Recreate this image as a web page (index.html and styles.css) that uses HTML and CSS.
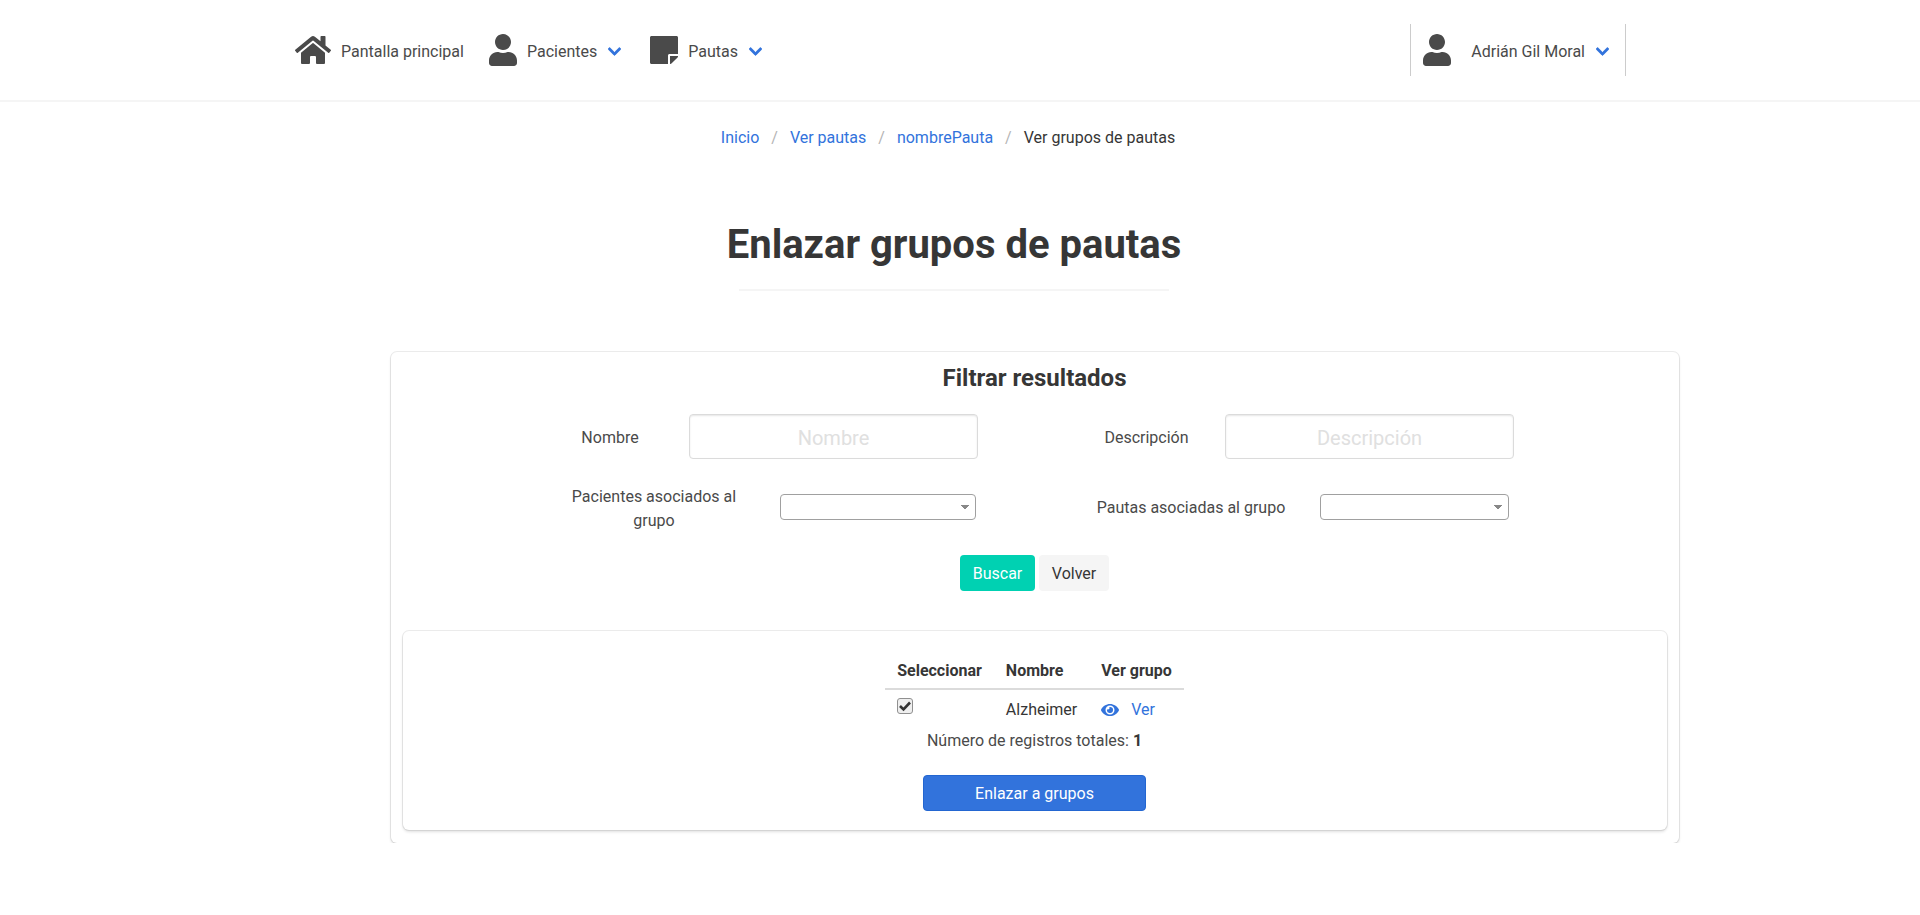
FILE: index.html
```html
<!DOCTYPE html>
<html lang="es">
<head>
    <meta charset="UTF-8">
    <meta name="viewport" content="width=device-width, initial-scale=1.0">
    <title>Enlazar grupos de pautas</title>
    <link rel="stylesheet" href="styles.css">
</head>
<body>
    <svg class="icon-defs" xmlns="http://www.w3.org/2000/svg">
        <symbol id="i-home" viewBox="0 0 576 512"><path d="M280.37 148.26L96 300.11V464a16 16 0 0 0 16 16l112.06-.29a16 16 0 0 0 15.92-16V368a16 16 0 0 1 16-16h64a16 16 0 0 1 16 16v95.64a16 16 0 0 0 16 16.05L464 480a16 16 0 0 0 16-16V300L295.67 148.26a12.19 12.19 0 0 0-15.3 0zM571.6 251.47L488 182.56V44.05a12 12 0 0 0-12-12h-56a12 12 0 0 0-12 12v72.61L318.47 43a48 48 0 0 0-61 0L4.34 251.47a12 12 0 0 0-1.6 16.9l25.5 31A12 12 0 0 0 45.15 301l235.22-193.74a12.19 12.19 0 0 1 15.3 0L530.9 301a12 12 0 0 0 16.9-1.6l25.5-31a12 12 0 0 0-1.7-16.93z"/></symbol>
        <symbol id="i-user" viewBox="0 0 448 512"><path d="M224 256c70.7 0 128-57.3 128-128S294.7 0 224 0 96 57.3 96 128s57.3 128 128 128zm89.6 32h-16.7c-22.2 10.2-46.9 16-72.9 16s-50.6-5.8-72.9-16h-16.7C60.2 288 0 348.2 0 422.4V464c0 26.5 21.5 48 48 48h352c26.5 0 48-21.5 48-48v-41.6c0-74.2-60.2-134.4-134.4-134.4z"/></symbol>
        <symbol id="i-note" viewBox="0 0 448 512"><path d="M312 320h136V56c0-13.3-10.7-24-24-24H24C10.7 32 0 42.7 0 56v400c0 13.3 10.7 24 24 24h264V344c0-13.2 10.8-24 24-24zm129 55l-98 98c-4.5 4.5-10.6 7-17 7h-6V352h128v6.1c0 6.3-2.5 12.4-7 16.9z"/></symbol>
        <symbol id="i-chevron" viewBox="0 0 448 512"><path d="M207.029 381.476L12.686 187.132c-9.373-9.373-9.373-24.569 0-33.941l22.667-22.667c9.357-9.357 24.522-9.375 33.901-.04L224 284.505l154.745-154.021c9.379-9.335 24.544-9.317 33.901.04l22.667 22.667c9.373 9.373 9.373 24.569 0 33.941L240.971 381.476c-9.373 9.372-24.569 9.372-33.942 0z"/></symbol>
        <symbol id="i-eye" viewBox="0 0 576 512"><path d="M572.52 241.4C518.29 135.59 410.93 64 288 64S57.68 135.64 3.48 241.41a32.35 32.35 0 0 0 0 29.19C57.71 376.41 165.07 448 288 448s230.32-71.64 284.52-177.41a32.35 32.35 0 0 0 0-29.19zM288 400a144 144 0 1 1 144-144 143.93 143.93 0 0 1-144 144zm0-240a95.31 95.31 0 0 0-25.31 3.79 47.85 47.85 0 0 1-66.9 66.9A95.78 95.78 0 1 0 288 160z"/></symbol>
    </svg>

    <nav class="navbar">
        <a class="nav-item" href="#">
            <svg class="nav-icon nav-icon-wide"><use href="#i-home"/></svg>
            <span>Pantalla principal</span>
        </a>
        <a class="nav-item" href="#">
            <svg class="nav-icon"><use href="#i-user"/></svg>
            <span>Pacientes</span>
            <svg class="chevron"><use href="#i-chevron"/></svg>
        </a>
        <a class="nav-item" href="#">
            <svg class="nav-icon"><use href="#i-note"/></svg>
            <span>Pautas</span>
            <svg class="chevron"><use href="#i-chevron"/></svg>
        </a>
        <a class="nav-user" href="#">
            <svg class="nav-icon"><use href="#i-user"/></svg>
            <span>Adrián Gil Moral</span>
            <svg class="chevron"><use href="#i-chevron"/></svg>
        </a>
    </nav>

    <div class="page-head">
        <ul class="breadcrumb">
            <li><a href="#">Inicio</a></li>
            <li><a href="#">Ver pautas</a></li>
            <li><a href="#">nombrePauta</a></li>
            <li class="current">Ver grupos de pautas</li>
        </ul>
        <h1 class="title">Enlazar grupos de pautas</h1>
        <hr class="title-rule">
    </div>

    <section class="card">
        <h2 class="card-title">Filtrar resultados</h2>

        <form class="filters">
            <div class="filter-row text-row">
                <label class="filter-label" for="nombre">Nombre</label>
                <input class="text-input" id="nombre" type="text" placeholder="Nombre">
                <label class="filter-label label-second" for="descripcion">Descripción</label>
                <input class="text-input" id="descripcion" type="text" placeholder="Descripción">
            </div>
            <div class="filter-row select-row">
                <label class="filter-label label-first" for="pacientes">Pacientes asociados al grupo</label>
                <select class="select-input" id="pacientes"><option value=""></option></select>
                <label class="filter-label label-pautas" for="pautas">Pautas asociadas al grupo</label>
                <select class="select-input" id="pautas"><option value=""></option></select>
            </div>
            <div class="filter-actions">
                <button class="btn btn-search" type="button">Buscar</button>
                <button class="btn btn-back" type="button">Volver</button>
            </div>
        </form>

        <div class="results">
            <table class="results-table">
                <thead>
                    <tr><th>Seleccionar</th><th>Nombre</th><th>Ver grupo</th></tr>
                </thead>
                <tbody>
                    <tr>
                        <td>
                            <span class="check-wrap">
                                <input class="row-check" type="checkbox" checked>
                                <svg class="check-mark" viewBox="0 0 16 16"><path d="M3 8l3.5 3.5L13 4.5" fill="none" stroke="#333" stroke-width="2.6"/></svg>
                            </span>
                        </td>
                        <td>Alzheimer</td>
                        <td><a class="view-link" href="#"><svg class="eye"><use href="#i-eye"/></svg>Ver</a></td>
                    </tr>
                </tbody>
            </table>
            <p class="total">Número de registros totales: <strong>1</strong></p>
            <button class="btn btn-link-groups" type="button">Enlazar a grupos</button>
        </div>
    </section>
</body>
</html>
```

FILE: styles.css
```css
* {
    box-sizing: border-box;
}
body {
    font-family: Roboto, "Liberation Sans", sans-serif;
    font-size: 16px;
    color: #4a4a4a;
    background-color: white;
    margin: 0;
}
a {
    color: #3273dc;
    text-decoration: none;
}
.icon-defs {
    display: none;
}

/* navbar */
.navbar {
    display: flex;
    align-items: center;
    height: 102px;
    padding: 0 294px 0 295px;
    border-bottom: 2px solid #f5f5f5;
}
.nav-item {
    display: flex;
    align-items: center;
    margin-right: 25px;
    color: #4a4a4a;
}
.nav-item span,
.nav-user span {
    padding-top: 2px;
}
.nav-icon {
    width: 28px;
    height: 32px;
    margin-right: 10px;
    fill: #4a4a4a;
}
.nav-icon-wide {
    width: 36px;
}
.chevron {
    width: 13px;
    height: 15px;
    margin: 3px 4px 0 11px;
    fill: #3273dc;
    stroke: #3273dc;
    stroke-width: 24;
}
.nav-user {
    display: flex;
    align-items: center;
    height: 52px;
    margin-left: auto;
    padding: 0 12px;
    border-left: 1px solid #ccc;
    border-right: 1px solid #ccc;
    color: #4a4a4a;
}
.nav-user .nav-icon {
    margin-right: 20px;
}

/* heading */
.page-head {
    width: 1908px;
    text-align: center;
}
.breadcrumb {
    display: flex;
    justify-content: center;
    margin: 0 12px 0 0;
    padding: 24px 0 0;
    list-style: none;
    line-height: 24px;
}
.breadcrumb li + li::before {
    content: "/";
    padding: 0 12px;
    color: #b5b5b5;
}
.current {
    color: #363636;
}
.title {
    margin: 70px 0 0;
    font-size: 40px;
    line-height: 50px;
    font-weight: 700;
    color: #363636;
}
.title-rule {
    width: 430px;
    height: 2px;
    margin: 19px auto 0;
    border: none;
    background-color: #f5f5f5;
}

/* filter card */
.card {
    width: 1288px;
    height: 491px;
    margin: 61px 0 0 391px;
    padding: 12px;
    border-radius: 6px;
    box-shadow: 0 2px 3px rgba(10, 10, 10, 0.12), 0 0 0 1px rgba(10, 10, 10, 0.08);
}
.card-title {
    margin: 0 1px 0 0;
    font-size: 24px;
    line-height: 28px;
    font-weight: 700;
    text-align: center;
    color: #363636;
}
.filter-row {
    display: grid;
    align-items: center;
    text-align: center;
}
.text-row {
    grid-template-columns: 156px 289px 247px 289px;
    margin: 22px 0 0 130px;
}
.select-row {
    grid-template-columns: 211px 196px 344px 189px;
    margin: 24px 0 0 166px;
}
.filter-label {
    margin-top: 1px;
    margin-bottom: -1px;
    line-height: 24px;
}
.text-row .filter-label:first-child {
    margin-right: 2px;
}
.label-second {
    margin-left: 90px;
}
.label-first {
    margin-top: 2px;
    margin-bottom: -2px;
    margin-right: 41px;
}
.label-pautas {
    margin-left: 86px;
}
.text-input {
    height: 45px;
    padding: 2px 10px 0;
    border: 1px solid #dbdbdb;
    border-radius: 4px;
    box-shadow: inset 0 1px 2px rgba(10, 10, 10, 0.1);
    font-family: inherit;
    font-size: 20px;
    text-align: center;
    color: #363636;
}
.text-input::placeholder {
    color: #e0e0e0;
}
.select-input {
    appearance: none;
    height: 26px;
    border: 1px solid #a0a0a0;
    border-radius: 4px;
    font-family: inherit;
    font-size: 16px;
    background-color: white;
    /* the little triangle of the select */
    background-image: linear-gradient(45deg, transparent 50%, #888 50%), linear-gradient(-45deg, transparent 50%, #888 50%);
    background-size: 4px 5px, 4px 5px;
    background-position: right 10px top 10px, right 6px top 10px;
    background-repeat: no-repeat;
}
.filter-actions {
    display: flex;
    justify-content: center;
    gap: 4px;
    margin: 24px 1px 0 0;
}
.btn {
    height: 36px;
    border: none;
    border-radius: 4px;
    font-family: inherit;
    font-size: 16px;
    cursor: pointer;
}
.btn-search {
    width: 75px;
    padding-top: 2px;
    background-color: #00d1b2;
    color: white;
}
.btn-back {
    width: 70px;
    padding-top: 2px;
    background-color: #f5f5f5;
    color: #363636;
}

/* results */
.results {
    display: flex;
    flex-direction: column;
    align-items: center;
    height: 199px;
    margin-top: 40px;
    padding: 28px 1px 0 0;
    border-radius: 6px;
    box-shadow: 0 2px 3px rgba(10, 10, 10, 0.12), 0 0 0 1px rgba(10, 10, 10, 0.08);
}
.results-table {
    border-collapse: collapse;
    color: #363636;
}
.results-table th {
    padding: 0 12px 5px;
    border-bottom: 2px solid #dbdbdb;
    line-height: 24px;
    text-align: left;
}
.results-table td {
    padding: 8px 12px 0;
    line-height: 24px;
    vertical-align: top;
}
.check-wrap {
    display: block;
    position: relative;
    width: 16px;
    height: 16px;
}
.row-check {
    appearance: none;
    display: block;
    width: 16px;
    height: 16px;
    margin: 0;
    border: 1px solid #909090;
    border-radius: 3px;
    background-color: #efefef;
}
.check-mark {
    position: absolute;
    top: 0;
    left: 0;
    width: 16px;
    height: 16px;
}
.view-link {
    display: flex;
    align-items: center;
}
.eye {
    width: 18px;
    height: 16px;
    margin-right: 12px;
    fill: #3273dc;
}
.total {
    margin: 7px 0 0;
    line-height: 24px;
}
.total strong {
    color: #363636;
}
.btn-link-groups {
    width: 223px;
    margin-top: 22px;
    border: 1px solid #2366d1;
    background-color: #3273dc;
    color: white;
}
```
